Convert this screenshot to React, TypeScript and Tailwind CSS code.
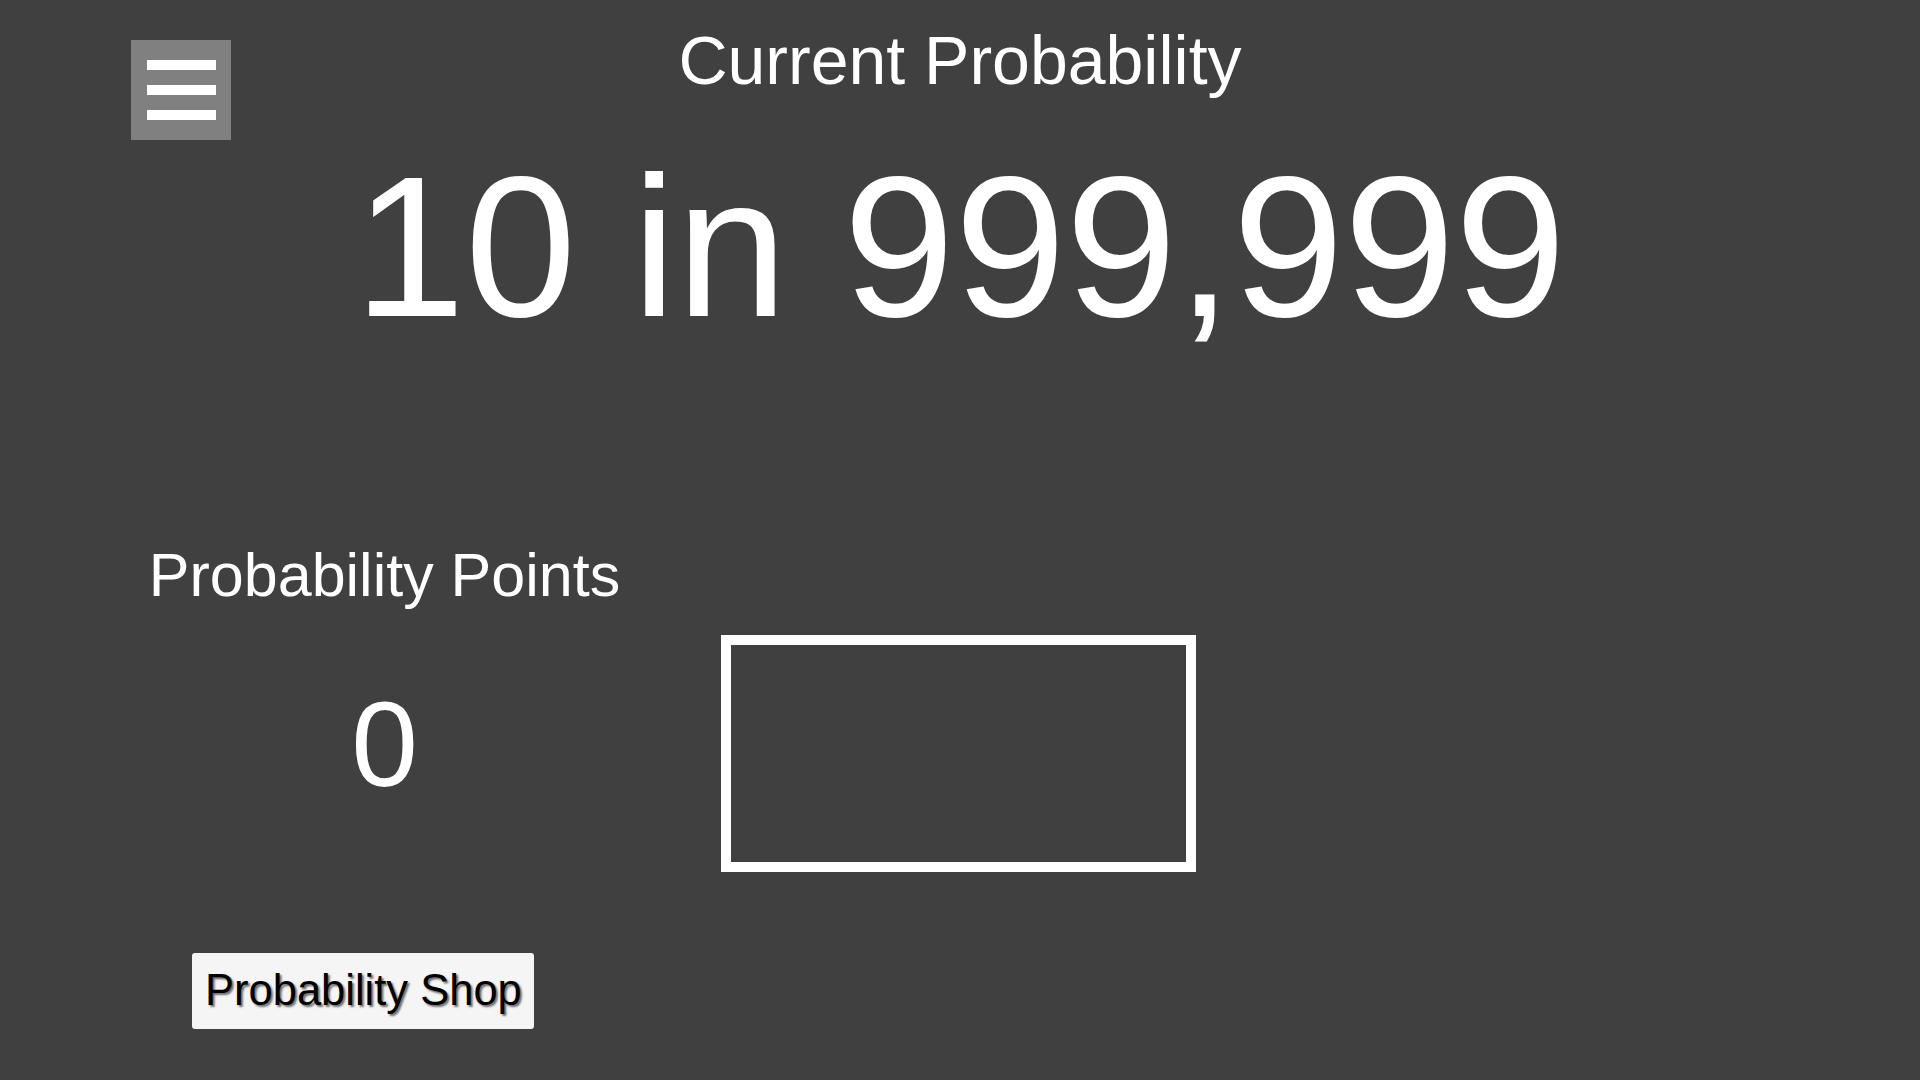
export default function App() {
  return (
    <div className="min-h-screen w-full bg-[#404040] text-white font-['Liberation_Sans',Arial,sans-serif] overflow-hidden">
      {/* header */}
      <div className="grid grid-cols-[1fr_auto_1fr]">
        <div className="pl-[131px] pt-[40px]">
          <button className="w-[100px] h-[100px] bg-[#808080] flex flex-col items-center justify-center gap-[15px]">
            <span className="block w-[69px] h-[10px] bg-white" />
            <span className="block w-[69px] h-[10px] bg-white" />
            <span className="block w-[69px] h-[10px] bg-white" />
          </button>
        </div>
        <h1 className="pt-[26px] text-[68px] leading-none whitespace-nowrap">Current Probability</h1>
        <div />
      </div>

      <div className="mt-[7px] text-center text-[200px] leading-none whitespace-nowrap">10 in 999,999</div>

      {/* points + box */}
      <div className="flex pl-[150px] pt-[198px]">
        <div className="w-[469px] flex flex-col items-center">
          <div className="text-[61px] leading-none whitespace-nowrap">Probability Points</div>
          <div className="mt-[78px] text-[120px] leading-none">0</div>
        </div>
        <div className="ml-[102px] mt-[90px] w-[475px] h-[237px] border-[10px] border-white" />
      </div>

      <div className="pl-[192px] pt-[81px]">
        <button className="h-[76px] w-[342px] px-[13px] flex items-center bg-[#f5f5f5] rounded-[3px] text-black text-[43.5px] leading-none whitespace-nowrap [text-shadow:2px_2px_2px_#6e6e6e]">
          Probability Shop
        </button>
      </div>
    </div>
  )
}
